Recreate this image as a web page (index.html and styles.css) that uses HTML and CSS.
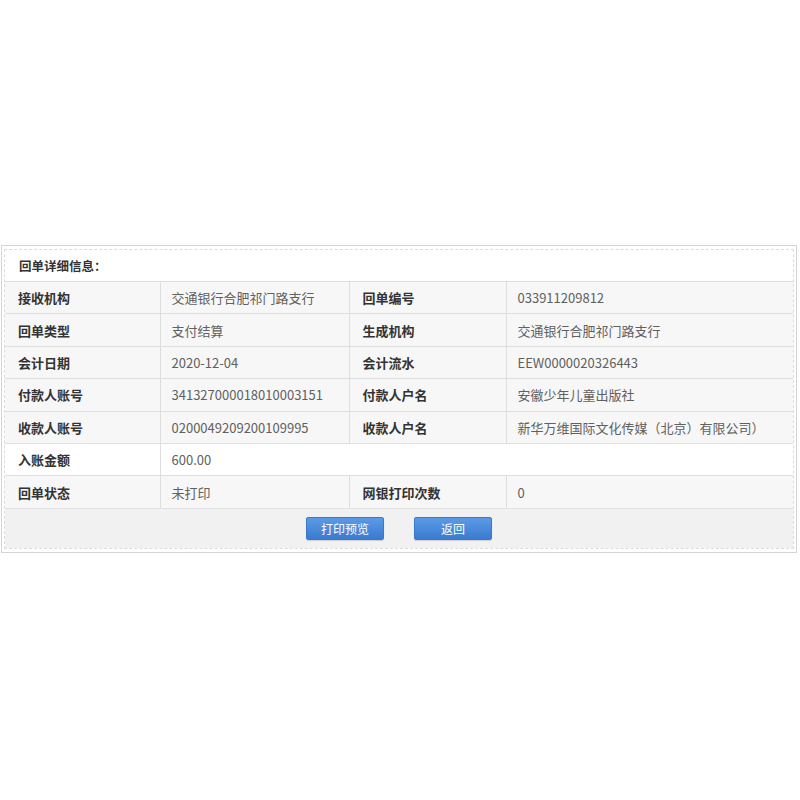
FILE: index.html
```html
<!DOCTYPE html>
<html lang="zh-CN">
<head>
<meta charset="utf-8">
<title>回单详细信息</title>
<link rel="stylesheet" href="styles.css">
</head>
<body>
<div class="page">
  <div class="outer">
    <div class="inner">
      <div class="title">回单详细信息：</div>
      <table class="detail">
        <colgroup>
          <col class="c1"><col class="c2"><col class="c3"><col class="c4">
        </colgroup>
        <tr>
          <th>接收机构</th><td>交通银行合肥祁门路支行</td>
          <th>回单编号</th><td>033911209812</td>
        </tr>
        <tr>
          <th>回单类型</th><td>支付结算</td>
          <th>生成机构</th><td>交通银行合肥祁门路支行</td>
        </tr>
        <tr>
          <th>会计日期</th><td>2020-12-04</td>
          <th>会计流水</th><td>EEW0000020326443</td>
        </tr>
        <tr>
          <th>付款人账号</th><td>341327000018010003151</td>
          <th>付款人户名</th><td>安徽少年儿童出版社</td>
        </tr>
        <tr>
          <th>收款人账号</th><td>0200049209200109995</td>
          <th>收款人户名</th><td>新华万维国际文化传媒（北京）有限公司）</td>
        </tr>
        <tr class="white">
          <th>入账金额</th><td colspan="3">600.00</td>
        </tr>
        <tr>
          <th>回单状态</th><td>未打印</td>
          <th>网银打印次数</th><td>0</td>
        </tr>
      </table>
      <div class="actions">
        <button class="btn">打印预览</button>
        <button class="btn">返回</button>
      </div>
    </div>
  </div>
</div>
</body>
</html>
```

FILE: styles.css
```css
html, body {
  margin: 0;
  padding: 0;
  background: #ffffff;
}
body {
  font-family: "Noto Sans CJK SC", "Noto Sans", "Liberation Sans", sans-serif;
  font-size: 13px;
  color: #333;
}
.page {
  padding-top: 245px;
  padding-left: 1px;
  width: 796px;
}
.outer {
  border: 1px solid #d4d4d4;
  padding: 3px 2px 3px 2px;
}
.inner {
  border: 1px dashed #dcdcdc;
}
.title {
  height: 31px;
  line-height: 31px;
  padding-left: 14px;
  font-weight: bold;
  font-size: 12.5px;
  color: #333;
  background: #fff;
}
.detail {
  width: 100%;
  border-collapse: collapse;
  table-layout: fixed;
}
.c1 { width: 155px; }
.c2 { width: 189px; }
.c3 { width: 157px; }
.detail th, .detail td {
  height: 31.4px;
  border: 1px solid #dedede;
  padding: 0 0 0 13px;
  text-align: left;
  white-space: nowrap;
  background: #f7f7f7;
}
.detail td {
  padding-left: 11px;
}
.detail tr th:first-child { border-left: none; }
.detail tr td:last-child { border-right: none; }
.detail th {
  font-weight: bold;
  color: #333;
}
.detail td {
  color: #606060;
  font-weight: normal;
}
.detail tr.white th, .detail tr.white td {
  background: #fff;
}
.actions {
  background: #f1f1f1;
  height: 39px;
  display: flex;
  align-items: center;
  justify-content: center;
  gap: 30px;
  border-top: 1px solid #e2e2e2;
  margin-top: -1px;
}
.btn {
  width: 78px;
  height: 23px;
  border: 1px solid #3a78c8;
  border-radius: 2px;
  background: linear-gradient(#5a9ae6, #3b7bd0);
  color: #fff;
  font-family: "Noto Sans CJK SC", sans-serif;
  font-size: 12px;
  line-height: 21px;
  padding: 0;
  box-shadow: 0 1px 1px rgba(0,0,0,0.15);
}
```
